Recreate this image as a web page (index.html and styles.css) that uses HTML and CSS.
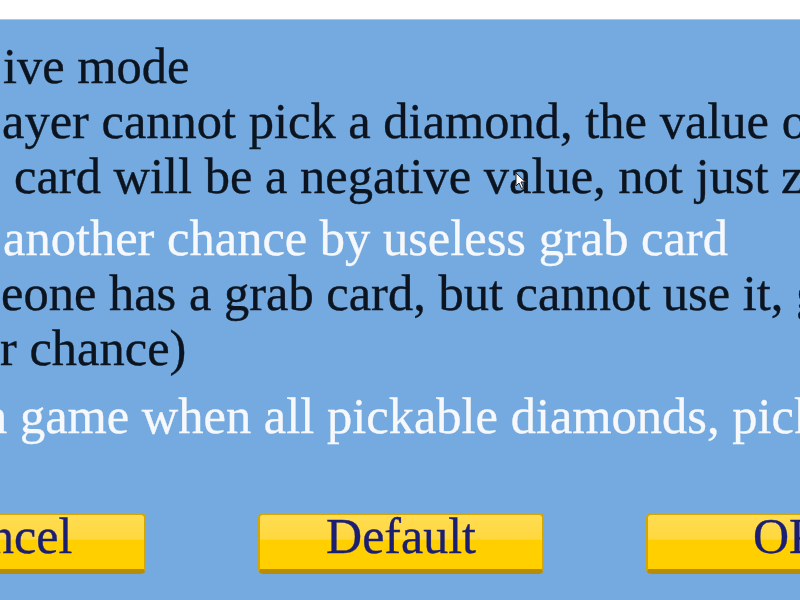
FILE: index.html
```html
<!DOCTYPE html>
<html>
<head>
<meta charset="utf-8">
<link rel="stylesheet" href="styles.css">
</head>
<body>
<div class="topbar"></div>
<div class="panel">
  <div class="group">
    <div class="line dark off-3">ive mode</div>
    <div class="line dark off-2">ayer cannot pick a diamond, the value of</div>
    <div class="line dark off-14">card will be a negative value, not just zero)</div>
  </div>
  <div class="group group-2">
    <div class="line light off-3">another chance by useless grab card</div>
    <div class="line dark off-1">eone has a grab card, but cannot use it, give</div>
    <div class="line dark off-0">r chance)</div>
  </div>
  <div class="group group-3">
    <div class="line light off-n">n game when all pickable diamonds, picked</div>
  </div>
  <div class="buttons">
    <div class="btn btn-cancel"><span>Cancel</span></div>
    <div class="btn btn-default"><span>Default</span></div>
    <div class="btn btn-ok"><span>OK</span></div>
  </div>
  <svg class="cursor" width="12" height="18" viewBox="0 0 12 18"><path d="M1 1 L1 14 L4 11 L6.5 16.5 L8.5 15.5 L6 10 L10.5 10 Z" fill="#ffffff" stroke="#222" stroke-width="1"/></svg>
</div>
</body>
</html>
```
FILE: styles.css
```css
html, body {
  margin: 0;
  padding: 0;
  width: 800px;
  height: 600px;
  overflow: hidden;
  background: #74aadf;
}
.topbar {
  height: 20px;
  background: #ffffff;
  border-bottom: 1px solid #a8c9ea;
  box-sizing: border-box;
}
.panel {
  position: relative;
  height: 580px;
  background: #74aadf;
  padding-top: 19px;
  box-sizing: border-box;
  display: flex;
  flex-direction: column;
  font-family: "Liberation Serif", "Times New Roman", serif;
  overflow: hidden;
}
.group {
  display: flex;
  flex-direction: column;
}
.group-2 { margin-top: 7px; }
.group-3 { margin-top: 13px; }
.line {
  font-size: 50.5px;
  line-height: 55px;
  height: 55px;
  white-space: nowrap;
  -webkit-text-stroke: 0.35px currentColor;
}
.dark { color: #0c1420; }
.light { color: #f6f8fb; }
.off-0 { margin-left: 0; }
.off-1 { margin-left: 1px; }
.off-2 { margin-left: 2px; }
.off-3 { margin-left: 3px; }
.off-14 { margin-left: 14px; }
.off-n { margin-left: -18px; }
.buttons {
  display: flex;
  margin-top: 69px;
  margin-left: -140px;
}
.btn {
  flex: 0 0 auto;
  width: 286px;
  height: 61px;
  box-sizing: border-box;
  border: 2px solid #d6a600;
  border-bottom: 5px solid #b98c05;
  border-radius: 5px;
  background: linear-gradient(to bottom, #ffdc52 0%, #ffd83e 45%, #ffcf00 46%, #ffcf00 100%);
  display: flex;
  justify-content: center;
  font-size: 50px;
  line-height: 42px;
  color: #1b1f73;
  white-space: nowrap;
  -webkit-text-stroke: 0.35px currentColor;
}
.btn-default { margin-left: 112px; }
.btn-ok { margin-left: 102px; }
.cursor {
  position: absolute;
  left: 515px;
  top: 152px;
}
```
